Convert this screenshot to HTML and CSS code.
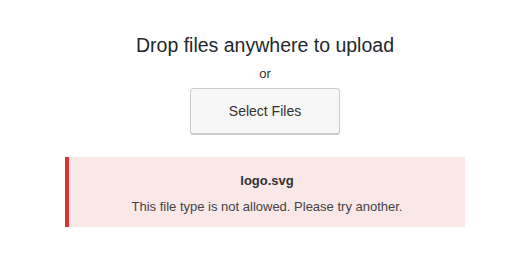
FILE: index.html
```html
<!DOCTYPE html>
<html lang="en">
  <head>
    <meta charset="UTF-8" />
    <title>Upload Files</title>
    <link rel="stylesheet" href="styles.css">
  </head>
  <body>
    <main class="uploader">
      <h2 class="upload-title">Drop files anywhere to upload</h2>
      <p class="upload-or">or</p>
      <button class="select-files">Select Files</button>

      <!-- Upload error -->
      <div class="upload-error">
        <span class="error-file">logo.svg</span>
        <span class="error-message">This file type is not allowed. Please try another.</span>
      </div>
    </main>
  </body>
</html>
```

FILE: styles.css
```css
* {
  margin: 0;
  padding: 0;
  box-sizing: border-box;
  font-family: "Liberation Sans", Arial, sans-serif;
}

body {
  background-color: #fff;
  color: #23282d;
}

.uploader {
  display: flex;
  flex-direction: column;
  align-items: center;
  padding: 31px 0 0 20px;
}

.upload-title {
  font-size: 19.5px;
  font-weight: normal;
  line-height: 28px;
  color: #23282d;
}

.upload-or {
  font-size: 13px;
  line-height: 20px;
  margin-top: 5px;
  color: #333;
}

.select-files {
  margin-top: 4px;
  width: 150px;
  height: 46px;
  font-size: 14px;
  color: #333;
  background-color: #f7f7f7;
  border: 1px solid #ccc;
  border-radius: 3px;
  box-shadow: 0 1px 0 #ccc;
  cursor: pointer;
}

.upload-error {
  display: flex;
  flex-direction: column;
  align-items: center;
  width: 400px;
  margin-top: 23px;
  padding: 14px 12px 10px;
  background-color: #fae7e7;
  border-left: 4px solid #dc3232;
  font-size: 13px;
  line-height: 20px;
  color: #444;
}

.error-file {
  font-weight: bold;
  color: #333;
}

.error-message {
  margin-top: 6px;
}
```
